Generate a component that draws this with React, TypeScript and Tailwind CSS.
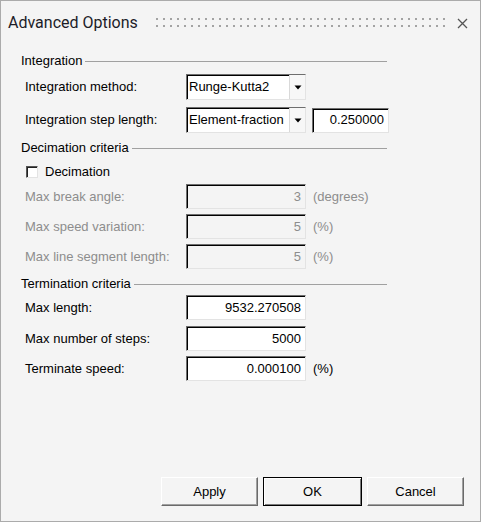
import React from "react";

const sunken =
  "border border-t-[#6e6e6e] border-l-[#6e6e6e] border-b-[#e3e3e3] border-r-[#e3e3e3] shadow-[inset_1px_1px_0_#000]";

function GroupHeader({ label, className = "" }: { label: string; className?: string }) {
  return (
    <div className={`flex items-center h-4 w-[366px] ${className}`}>
      <span className="text-black leading-4">{label}</span>
      <div className="flex-1 ml-[3px] h-px bg-[#a0a0a0]" />
    </div>
  );
}

function Dropdown({ value }: { value: string }) {
  return (
    <div className={`w-[120px] h-[26px] bg-white flex items-stretch ${sunken}`}>
      <span className="flex-1 pl-[2px] flex items-center text-black">{value}</span>
      <div className="w-[16px] border-l border-[#d9d9d9] bg-[#f7f7f7] flex items-center justify-center">
        <svg width="8" height="5" viewBox="0 0 8 5">
          <path d="M0.5 0.5 H7.5 L4 4.5 Z" fill="#000" />
        </svg>
      </div>
    </div>
  );
}

function NumField({
  value,
  disabled,
  width = "w-[120px]",
}: {
  value: string;
  disabled?: boolean;
  width?: string;
}) {
  return (
    <div
      className={`${width} h-[25px] flex items-center justify-end pr-[4px] ${sunken} ${
        disabled ? "bg-[#f4f4f4] text-[#8d8d8d]" : "bg-white text-black"
      }`}
    >
      {value}
    </div>
  );
}

function Row({
  label,
  disabled,
  children,
  className = "",
}: {
  label: string;
  disabled?: boolean;
  children: React.ReactNode;
  className?: string;
}) {
  return (
    <div className={`flex items-center ${className}`}>
      <span className={`w-[165px] pl-[4px] ${disabled ? "text-[#8d8d8d]" : "text-black"}`}>{label}</span>
      {children}
    </div>
  );
}

function Btn({ label, primary }: { label: string; primary?: boolean }) {
  return (
    <div
      className={`h-[29px] flex items-center justify-center text-black ${
        primary
          ? "w-[99px] border border-black shadow-[inset_1px_1px_0_#fff,inset_-1px_-1px_0_#7a7a7a]"
          : "w-[97px] border border-t-white border-l-white border-b-[#6a6a6a] border-r-[#6a6a6a] shadow-[inset_-1px_-1px_0_#a0a0a0]"
      } bg-[#f4f4f4]`}
    >
      {label}
    </div>
  );
}

export default function App() {
  return (
    <div className="w-[481px] h-[522px] border border-[#ababab] bg-[#f4f4f4] flex flex-col text-[13px] font-['Liberation_Sans',Arial,sans-serif]">
      <div className="h-[44px] flex items-center pl-[7px] pr-[12px]">
        <span className="font-['Roboto',sans-serif] text-[16px] text-[#1c1c28]">Advanced Options</span>
        <svg className="ml-[18px]" width="291" height="10" viewBox="0 0 291 10">
          <defs>
            <pattern id="grip" width="7" height="7" patternUnits="userSpaceOnUse">
              <rect x="0" y="0" width="2" height="2" fill="#a3a3a3" />
            </pattern>
          </defs>
          <rect x="0" y="0" width="291" height="9" fill="url(#grip)" />
        </svg>
        <div className="flex-1" />
        <svg width="11" height="11" viewBox="0 0 11 11">
          <path d="M1 1 L10 10 M10 1 L1 10" stroke="#555" strokeWidth="1.3" />
        </svg>
      </div>

      <div className="px-[20px] flex flex-col">
        <GroupHeader label="Integration" className="mt-[8px]" />
        <Row label="Integration method:" className="mt-[5px]">
          <Dropdown value="Runge-Kutta2" />
        </Row>
        <Row label="Integration step length:" className="mt-[7px]">
          <Dropdown value="Element-fraction" />
          <div className="ml-[6px]">
            <NumField value="0.250000" width="w-[77px]" />
          </div>
        </Row>

        <GroupHeader label="Decimation criteria" className="mt-[7px]" />
        <div className="mt-[9px] h-[14px] flex items-center pl-[5px]">
          <div className="w-[12px] h-[12px] bg-white border border-t-[#555] border-l-[#555] border-b-[#e3e3e3] border-r-[#e3e3e3] shadow-[inset_1px_1px_0_#222]" />
          <span className="ml-[7px] text-black">Decimation</span>
        </div>
        <Row label="Max break angle:" disabled className="mt-[5px]">
          <NumField value="3" disabled />
          <span className="ml-[7px] text-[#8d8d8d]">(degrees)</span>
        </Row>
        <Row label="Max speed variation:" disabled className="mt-[5px]">
          <NumField value="5" disabled />
          <span className="ml-[7px] text-[#8d8d8d]">(%)</span>
        </Row>
        <Row label="Max line segment length:" disabled className="mt-[5px]">
          <NumField value="5" disabled />
          <span className="ml-[7px] text-[#8d8d8d]">(%)</span>
        </Row>

        <GroupHeader label="Termination criteria" className="mt-[7px]" />
        <Row label="Max length:" className="mt-[3px]">
          <NumField value="9532.270508" />
        </Row>
        <Row label="Max number of steps:" className="mt-[6px]">
          <NumField value="5000" />
        </Row>
        <Row label="Terminate speed:" className="mt-[5px]">
          <NumField value="0.000100" />
          <span className="ml-[7px] text-black">(%)</span>
        </Row>
      </div>

      <div className="flex-1" />
      <div className="flex justify-end items-center gap-[5px] pr-[16px] pb-[15px]">
        <Btn label="Apply" />
        <Btn label="OK" primary />
        <Btn label="Cancel" />
      </div>
    </div>
  );
}
